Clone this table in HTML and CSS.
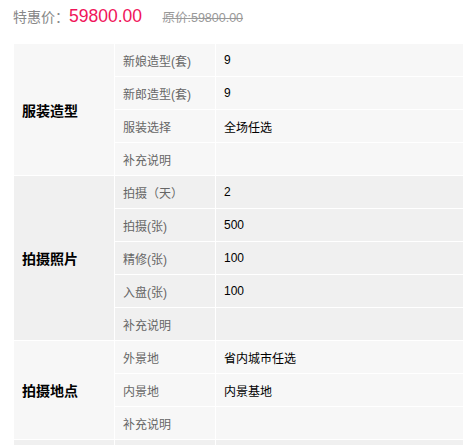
FILE: index.html
```html
<!DOCTYPE html>
<html lang="zh-CN">
<head>
  <meta charset="UTF-8">
  <title>套餐详情</title>
  <link rel="stylesheet" href="styles.css">
</head>
<body>

  <div class="price-bar">
    <span class="price-label">特惠价：</span><span class="price-now">59800.00</span>
    <span class="price-old">原价:59800.00</span>
  </div>

  <table class="detail">
    <colgroup>
      <col class="col-group">
      <col class="col-label">
      <col>
    </colgroup>

    <!-- 服装造型 -->
    <tbody class="light">
      <tr>
        <th rowspan="4">服装造型</th>
        <td class="label">新娘造型(套)</td>
        <td>9</td>
      </tr>
      <tr><td class="label">新郎造型(套)</td><td>9</td></tr>
      <tr><td class="label">服装选择</td><td>全场任选</td></tr>
      <tr><td class="label">补充说明</td><td></td></tr>
    </tbody>

    <!-- 拍摄照片 -->
    <tbody class="dark">
      <tr>
        <th rowspan="5">拍摄照片</th>
        <td class="label">拍摄（天）</td>
        <td>2</td>
      </tr>
      <tr><td class="label">拍摄(张)</td><td>500</td></tr>
      <tr><td class="label">精修(张)</td><td>100</td></tr>
      <tr><td class="label">入盘(张)</td><td>100</td></tr>
      <tr><td class="label">补充说明</td><td></td></tr>
    </tbody>

    <!-- 拍摄地点 -->
    <tbody class="light">
      <tr>
        <th rowspan="3">拍摄地点</th>
        <td class="label">外景地</td>
        <td>省内城市任选</td>
      </tr>
      <tr><td class="label">内景地</td><td>内景基地</td></tr>
      <tr><td class="label">补充说明</td><td></td></tr>
    </tbody>

    <!-- next group, only its top edge is in view -->
    <tbody class="dark">
      <tr><th></th><td class="label"></td><td></td></tr>
    </tbody>
  </table>

</body>
</html>
```

FILE: styles.css
```css
* {
  box-sizing: border-box;
  font-family: 'Liberation Sans', 'Noto Sans CJK SC', sans-serif;
}

body {
  margin: 0;
  padding: 0;
  background-color: #fff;
}

.price-bar {
  padding: 6px 0 0 13px;
  height: 43px;
  white-space: nowrap;
}

.price-label {
  font-size: 14px;
  color: #888;
}

.price-now {
  font-size: 17.5px;
  color: #f0145a;
}

.price-old {
  margin-left: 16px;
  font-size: 12.5px;
  color: #999;
  text-decoration: line-through;
}

.detail {
  margin-left: 13px;
  width: 470px;
  border-collapse: collapse;
  table-layout: fixed;
}

.col-group,
.col-label {
  width: 101px;
}

.detail th,
.detail td {
  height: 33px;
  padding: 0 8px;
  border: 1px solid #fff;
  font-size: 12px;
  color: #000;
  text-align: left;
  white-space: nowrap;
}

.detail th {
  font-size: 14px;
  font-weight: 700;
}

.detail td.label {
  color: #666;
}

.light th,
.light td {
  background-color: #f7f7f7;
}

.dark th,
.dark td {
  background-color: #f0f0f0;
}
```
